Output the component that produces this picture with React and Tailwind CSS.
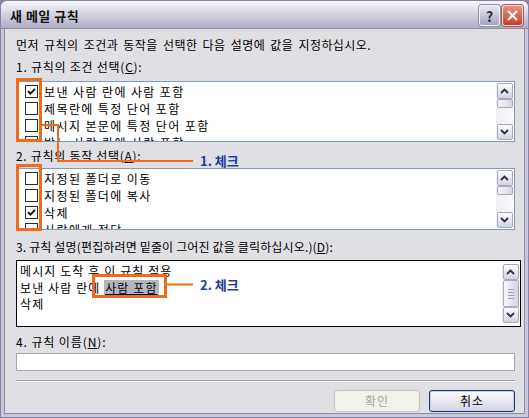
import React from "react";

function Check({ checked }) {
  return (
    <span className="w-[13px] h-[13px] border border-[#2b2b3b] bg-white flex items-center justify-center shrink-0">
      {checked && (
        <svg width="9" height="9" viewBox="0 0 9 9">
          <path d="M1 4.2 L3.4 6.6 L8 1.8" stroke="#000" strokeWidth="1.8" fill="none" />
        </svg>
      )}
    </span>
  );
}

function Arrow({ up }) {
  return (
    <svg width="9" height="6" viewBox="0 0 9 6">
      <path
        d={up ? "M1 5 L4.5 1.5 L8 5" : "M1 1 L4.5 4.5 L8 1"}
        stroke="#2d2d48"
        strokeWidth="1.8"
        fill="none"
      />
    </svg>
  );
}

function SBtn({ up }) {
  return (
    <div className="h-[16px] w-[16px] rounded-[2px] border border-[#a9a8bf] bg-gradient-to-b from-[#fdfdfe] to-[#d3d3e0] flex items-center justify-center shrink-0">
      <Arrow up={up} />
    </div>
  );
}

function ScrollBar({ grip }) {
  return (
    <div className="w-[17px] h-full flex flex-col bg-gradient-to-r from-[#eeeef4] to-[#f8f8fb] px-[0.5px] shrink-0">
      <SBtn up />
      <div className="flex-1 flex flex-col">
        <div
          className={
            "w-[16px] rounded-[2px] border border-[#a9a8bf] bg-gradient-to-r from-[#f7f7fa] to-[#d5d5e1] flex flex-col items-center justify-center gap-[2px] " +
            (grip ? "h-[27px]" : "h-[9px]")
          }
        >
          {grip && (
            <>
              <div className="w-[6px] h-px bg-[#9c9cb4]" />
              <div className="w-[6px] h-px bg-[#9c9cb4]" />
              <div className="w-[6px] h-px bg-[#9c9cb4]" />
              <div className="w-[6px] h-px bg-[#9c9cb4]" />
            </>
          )}
        </div>
      </div>
      <SBtn />
    </div>
  );
}

function Row({ checked, children }) {
  return (
    <div className="h-[17px] flex items-center gap-[6px] pl-[8px] shrink-0 whitespace-nowrap">
      <Check checked={checked} />
      <span className="tracking-[1.4px]">{children}</span>
    </div>
  );
}

function CheckList({ items, height }) {
  return (
    <div className={"w-[499px] border border-[#7f9db9] bg-white flex " + height}>
      <div className="flex-1 flex flex-col overflow-hidden pt-[1px]">
        {items.map(([c, t], i) => (
          <Row key={i} checked={c}>
            {t}
          </Row>
        ))}
      </div>
      <div className="py-px pr-px">
        <ScrollBar />
      </div>
    </div>
  );
}

export default function App() {
  return (
    <div className="relative w-[529px] h-[418px] bg-[#8584a5] p-px font-['Noto_Sans_CJK_KR','Noto_Sans',sans-serif] text-[12px] text-black leading-none">
      <div className="w-full h-full flex flex-col bg-[#c9c8d8] rounded-t-[6px] overflow-hidden">
        {/* title bar */}
        <div className="h-[28px] shrink-0 flex items-center justify-between pl-[9px] pr-[5px] bg-gradient-to-b from-[#f8f8fb] via-[#d2d2de] to-[#afaec4] border-b border-[#8d8cab]">
          <span className="font-bold text-[13px] tracking-[0.5px] text-[#111] mt-px">새 메일 규칙</span>
          <div className="flex gap-[2px] mt-[2px]">
            <div className="w-[21px] h-[21px] rounded-[3px] border border-[#f4f4f8] bg-gradient-to-b from-[#e9e9f1] to-[#a4a4bf] flex items-center justify-center text-[14px] font-bold text-[#2c2c44] shadow-[0_0_0_1px_#8f8fa9]">
              ?
            </div>
            <div className="w-[21px] h-[21px] rounded-[3px] border border-[#f6e6e2] bg-gradient-to-b from-[#e9907d] to-[#c63a2a] flex items-center justify-center shadow-[0_0_0_1px_#a45a55]">
              <svg width="13" height="13" viewBox="0 0 13 13">
                <path d="M2 2 L11 11 M11 2 L2 11" stroke="#fff" strokeWidth="2.2" />
              </svg>
            </div>
          </div>
        </div>

        {/* body */}
        <div className="flex-1 flex px-[3px] pb-[3px]">
          <div className="flex-1 bg-[#e0dfe3] flex flex-col pl-[11px] border-x border-b border-[#8d8cab]">
            <div className="mt-[10px] h-[12px] flex items-center whitespace-nowrap tracking-[0.45px] [word-spacing:2px]">
              먼저 규칙의 조건과 동작을 선택한 다음 설명에 값을 지정하십시오.
            </div>
            <div className="mt-[10px] h-[12px] flex items-center whitespace-nowrap tracking-[0.75px]">
              1. 규칙의 조건 선택(<span className="underline">C</span>):
            </div>
            <div className="mt-[8px]">
              <CheckList
                height="h-[61px]"
                items={[
                  [true, "보낸 사람 란에 사람 포함"],
                  [false, "제목란에 특정 단어 포함"],
                  [false, "메시지 본문에 특정 단어 포함"],
                  [false, "받는 사람 란에 사람 포함"],
                ]}
              />
            </div>
            <div className="mt-[8px] h-[12px] flex items-center whitespace-nowrap tracking-[0.7px]">
              2. 규칙의 동작 선택(<span className="underline">A</span>):
            </div>
            <div className="mt-[6px]">
              <CheckList
                height="h-[62px]"
                items={[
                  [false, "지정된 폴더로 이동"],
                  [false, "지정된 폴더에 복사"],
                  [true, "삭제"],
                  [false, "사람에게 전달"],
                ]}
              />
            </div>
            <div className="mt-[11px] h-[12px] flex items-center whitespace-nowrap tracking-[0.15px]">
              3. 규칙 설명(편집하려면 밑줄이 그어진 값을 클릭하십시오.)(<span className="underline">D</span>):
            </div>
            <div className="mt-[7px] w-[505px] h-[67px] border border-black bg-white flex">
              <div className="flex-1 flex flex-col pl-[3px] pt-[2px] whitespace-nowrap tracking-[1.1px]">
                <div className="h-[16px] flex items-center">메시지 도착 후 이 규칙 적용</div>
                <div className="h-[17px] flex items-center">
                  보낸 사람 란에&nbsp;
                  <span className="bg-[#b5b4c2] underline h-[16px] flex items-center px-px">사람 포함</span>
                </div>
                <div className="h-[16px] flex items-center">삭제</div>
              </div>
              <div className="py-[3px] pr-[1px]">
                <ScrollBar grip />
              </div>
            </div>
            <div className="mt-[9px] h-[12px] flex items-center whitespace-nowrap tracking-[0.9px]">
              4. 규칙 이름(<span className="underline">N</span>):
            </div>
            <div className="mt-[5px] w-[499px] h-[18px] border border-[#a5a7b5] bg-white" />
            <div className="mt-[9px] w-[499px] h-[2px] border-t border-[#a3a2b4] border-b border-b-white" />
            <div className="mt-[8px] w-[499px] flex justify-end gap-[9px]">
              <div className="w-[86px] h-[22px] rounded-[3px] border border-[#c6c5ba] bg-[#f2f1ec] flex items-center justify-center text-[#aca899] tracking-[1px]">
                확인
              </div>
              <div className="w-[86px] h-[22px] rounded-[3px] border border-[#1d3766] bg-gradient-to-b from-[#ffffff] to-[#d4d3e2] flex items-center justify-center shadow-[inset_0_0_0_1px_#c0d0ee] tracking-[1px]">
                취소
              </div>
            </div>
          </div>
        </div>
      </div>

      {/* annotations */}
      <div className="absolute left-[16px] top-[78px] w-[26px] h-[64px] border-[3px] border-[#f26b1a]" />
      <div className="absolute left-[16px] top-[164px] w-[26px] h-[67px] border-[3px] border-[#f26b1a]" />
      <svg className="absolute left-0 top-0" width="529" height="418" viewBox="0 0 529 418">
        <polyline points="42,125 58,125 58,161 193,161" stroke="#f26b1a" strokeWidth="2" fill="none" />
        <line x1="167" y1="284.5" x2="193" y2="284.5" stroke="#f26b1a" strokeWidth="2" />
      </svg>
      <div className="absolute left-[92px] top-[274px] w-[75px] h-[24px] border-[3px] border-[#f26b1a]" />
      <div className="absolute left-[200px] top-[154px] text-[13px] font-bold text-[#1e3ea0] leading-none whitespace-nowrap">
        1. 체크
      </div>
      <div className="absolute left-[200px] top-[278px] text-[13px] font-bold text-[#1e3ea0] leading-none whitespace-nowrap">
        2. 체크
      </div>
    </div>
  );
}
